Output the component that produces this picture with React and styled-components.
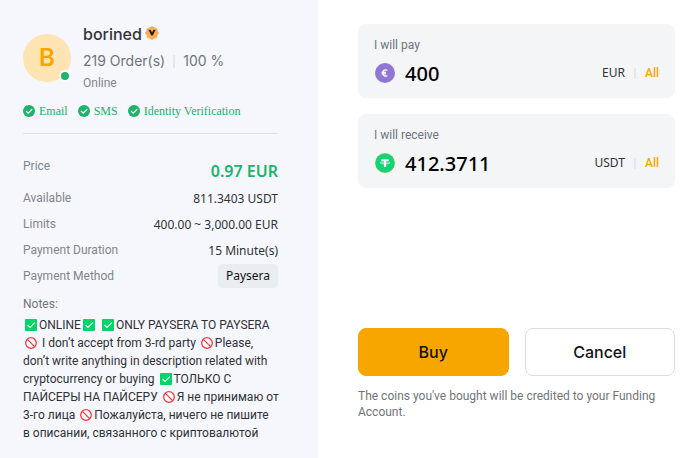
import React, { useState } from 'react';
import styled, { createGlobalStyle } from 'styled-components';

const GlobalStyle = createGlobalStyle`
  * {
    box-sizing: border-box;
  }

  body {
    margin: 0;
    background: #fff;
    color: #121214;
    font-family: Roboto, 'Noto Sans', sans-serif;
    font-size: 12px;
    line-height: 18px;
  }

  h2, p, dl, dd {
    margin: 0;
  }

  button, input {
    font-family: inherit;
  }
`;

const displayFont = "Inter, 'Noto Sans', sans-serif";
const numberFont = "'Noto Sans', sans-serif";

const Page = styled.main`
  display: grid;
  grid-template-columns: minmax(0, 318fr) minmax(0, 379fr);
  min-height: 100vh;
`;

const Advertiser = styled.section`
  background: #f5f7fc;
  padding: 23px 40px 16px 23px;
`;

const Profile = styled.div`
  display: flex;
  align-items: center;
  gap: 12px;
`;

const Avatar = styled.div`
  position: relative;
  display: flex;
  align-items: center;
  justify-content: center;
  flex: none;
  width: 48px;
  height: 48px;
  border-radius: 50%;
  background: #fde4b2;
  color: #f7a600;
  font-family: ${displayFont};
  font-size: 24px;
  font-weight: 600;
`;

const OnlineDot = styled.span`
  position: absolute;
  right: 0;
  bottom: 0;
  width: 12px;
  height: 12px;
  border: 2px solid #fff;
  border-radius: 50%;
  background: #20b26c;
`;

const ProfileText = styled.div`
  display: flex;
  flex-direction: column;
`;

const Name = styled.h2`
  display: flex;
  align-items: center;
  gap: 2px;
  font-family: ${displayFont};
  font-size: 16px;
  font-weight: 500;
  line-height: 22px;
  color: #303236;

  svg {
    margin-bottom: 2px;
  }
`;

const Stats = styled.div`
  display: flex;
  align-items: center;
  margin-top: 5px;
  font-family: ${displayFont};
  font-size: 14px;
  line-height: 22px;
  color: #71757a;
`;

const Divider = styled.span`
  width: 2px;
  height: ${({ $height }) => $height}px;
  margin: 0 ${({ $space }) => $space}px;
  background: #e5e7ea;
`;

const Status = styled.span`
  margin-top: 2px;
  color: #81858c;
`;

const Checks = styled.div`
  display: flex;
  gap: 10px;
  margin-top: 10px;
  padding-bottom: 13px;
  border-bottom: 1px solid #dfe1e6;
  color: #20b26c;
  font-family: 'Liberation Serif', serif;
`;

const Check = styled.span`
  display: flex;
  align-items: center;
  gap: 4px;
  white-space: nowrap;
`;

const Details = styled.dl`
  display: flex;
  flex-direction: column;
  gap: 8px;
  margin-top: 23px;
`;

const Detail = styled.div`
  display: flex;
  justify-content: space-between;
  height: ${({ $tall }) => ($tall ? 24 : 18)}px;
`;

const Term = styled.dt`
  color: #81858c;
`;

const Value = styled.dd`
  padding-top: 1px;
  color: #303236;
  font-family: ${numberFont};
`;

const Price = styled.dd`
  padding-top: 3px;
  color: #20b26c;
  font-family: ${numberFont};
  font-size: 16px;
  font-weight: 600;
  line-height: 22px;
`;

const Method = styled.dd`
  align-self: center;
  flex: none;
  padding: 3px 8px;
  border-radius: 4px;
  background: #e9ecf0;
  color: #121214;
  font-family: ${numberFont};
`;

const NotesTitle = styled.p`
  margin-top: 10px;
  color: #71757a;
`;

const Notes = styled.p`
  margin-top: 3px;
  color: #303236;
  white-space: nowrap;
`;

const Emoji = styled.svg`
  width: 12px;
  height: 12px;
  margin: 0 2px;
  vertical-align: -2px;
`;

const Order = styled.form`
  display: flex;
  flex-direction: column;
  padding: 24px 22px 16px 40px;
`;

const Field = styled.div`
  margin-bottom: 16px;
  padding: 12px 16px 8px;
  border-radius: 8px;
  background: #f3f5f7;
`;

const FieldLabel = styled.label`
  display: block;
  color: #71757a;
`;

const FieldRow = styled.div`
  display: flex;
  align-items: center;
  margin-top: 2px;
  height: 34px;
`;

const CoinIcon = styled.svg`
  flex: none;
  width: 22px;
  height: 22px;
`;

const Amount = styled.input`
  flex: 1;
  min-width: 0;
  height: 28px;
  margin-left: 9px;
  padding: 0;
  border: 0;
  outline: 0;
  background: none;
  color: #000;
  font-family: ${numberFont};
  font-size: 20px;
  font-weight: 500;
`;

const Currency = styled.span`
  color: #303236;
  font-family: ${numberFont};
`;

const AllButton = styled.button`
  padding: 0;
  border: 0;
  background: none;
  color: #f7a600;
  font-size: 12px;
  font-weight: 500;
  cursor: pointer;
`;

const Actions = styled.div`
  display: grid;
  grid-template-columns: 1fr 1fr;
  gap: 16px;
  margin-top: 124px;
`;

const ActionButton = styled.button`
  height: 48px;
  border: 1px solid ${({ $primary }) => ($primary ? '#f7a600' : '#d9dce0')};
  border-radius: 8px;
  background: ${({ $primary }) => ($primary ? '#f7a600' : '#fff')};
  color: #121214;
  font-family: ${displayFont};
  font-size: 16px;
  font-weight: 500;
  cursor: pointer;
`;

const Hint = styled.p`
  margin-top: 12px;
  color: #71757a;
  line-height: 16px;
`;

const VerifiedBadge = () => (
  <svg width="16" height="16" viewBox="0 0 16 16" aria-hidden="true">
    <path
      d="M8 1.5L10.1 2.9L12.6 3.4L13.1 5.9L14.5 8L13.1 10.1L12.6 12.6L10.1 13.1L8 14.5L5.9 13.1L3.4 12.6L2.9 10.1L1.5 8L2.9 5.9L3.4 3.4L5.9 2.9Z"
      fill="#f9ae55"
      stroke="#f9ae55"
      strokeLinejoin="round"
    />
    <path d="M4.5 4.8h2l1.6 2.4 1.5-2.4h2L8.9 10.5H7.2z" fill="#27231f" />
  </svg>
);

const CheckIcon = () => (
  <svg width="12" height="12" viewBox="0 0 12 12" aria-hidden="true">
    <circle cx="6" cy="6" r="6" fill="#20b26c" />
    <path d="M3 6l2.2 2.2L9.2 4.2" fill="none" stroke="#fff" strokeWidth="1.2" />
  </svg>
);

const Yes = () => (
  <Emoji viewBox="0 0 12 12" role="img" aria-label="Yes">
    <rect width="12" height="12" rx="1" fill="#00d569" />
    <path d="M2.5 6l2.5 2.5L9.8 3.7" fill="none" stroke="#fff" strokeWidth="1.2" />
  </Emoji>
);

const No = () => (
  <Emoji viewBox="0 0 12 12" role="img" aria-label="No">
    <circle cx="6" cy="6" r="5.3" fill="#fff" stroke="#fb3640" strokeWidth="1.3" />
    <path d="M2.4 2.4l7.2 7.2" stroke="#fb3640" strokeWidth="1.3" />
  </Emoji>
);

const EuroIcon = () => (
  <CoinIcon viewBox="0 0 22 22" aria-hidden="true">
    <circle cx="11" cy="11" r="10" fill="#9077d3" />
    <path
      d="M13.4 8.6A2.9 3.2 0 0 0 8.7 11a2.9 3.2 0 0 0 4.7 2.4M7.6 10.3h4.4M7.6 11.8h4.4"
      fill="none"
      stroke="#fff"
      strokeWidth="1.3"
    />
  </CoinIcon>
);

const TetherIcon = () => (
  <CoinIcon viewBox="0 0 22 22" aria-hidden="true">
    <circle cx="11" cy="11" r="10" fill="#d6bd58" />
    <circle cx="11" cy="11" r="9.6" fill="#0fd575" />
    <path d="M7.3 7.2h7.4v1.9h-2.6v6H9.9v-6H7.3z" fill="#fff" />
    <ellipse cx="11" cy="10.8" rx="4.7" ry="1" fill="none" stroke="#fff" strokeWidth="0.7" />
  </CoinIcon>
);

const CHECKS = ['Email', 'SMS', 'Identity Verification'];

const DETAILS = [
  ['Available', '811.3403 USDT'],
  ['Limits', '400.00 ~ 3,000.00 EUR'],
  ['Payment Duration', '15 Minute(s)'],
];

const AmountField = ({ id, label, icon, initial, currency }) => {
  const [value, setValue] = useState(initial);

  return (
    <Field>
      <FieldLabel htmlFor={id}>{label}</FieldLabel>
      <FieldRow>
        {icon}
        <Amount id={id} value={value} onChange={(e) => setValue(e.target.value)} />
        <Currency>{currency}</Currency>
        <Divider $height={11} $space={9} />
        <AllButton type="button" onClick={() => setValue(initial)}>
          All
        </AllButton>
      </FieldRow>
    </Field>
  );
};

export default function App() {
  return (
    <>
      <GlobalStyle />
      <Page>
        <Advertiser>
          <Profile>
            <Avatar>
              B
              <OnlineDot />
            </Avatar>
            <ProfileText>
              <Name>
                borined <VerifiedBadge />
              </Name>
              <Stats>
                219 Order(s)
                <Divider $height={13} $space={8} />
                100 %
              </Stats>
              <Status>Online</Status>
            </ProfileText>
          </Profile>

          <Checks>
            {CHECKS.map((check) => (
              <Check key={check}>
                <CheckIcon />
                {check}
              </Check>
            ))}
          </Checks>

          <Details>
            <Detail $tall>
              <Term>Price</Term>
              <Price>0.97 EUR</Price>
            </Detail>
            {DETAILS.map(([term, value]) => (
              <Detail key={term}>
                <Term>{term}</Term>
                <Value>{value}</Value>
              </Detail>
            ))}
            <Detail>
              <Term>Payment Method</Term>
              <Method>Paysera</Method>
            </Detail>
          </Details>

          <NotesTitle>Notes:</NotesTitle>
          <Notes>
            <Yes />ONLINE<Yes /> <Yes />ONLY PAYSERA TO PAYSERA
            <br />
            <No /> I don’t accept from 3-rd party <No />Please,
            <br />
            don’t write anything in description related with
            <br />
            cryptocurrency or buying <Yes />ТОЛЬКО С
            <br />
            ПАЙСЕРЫ НА ПАЙСЕРУ <No />Я не принимаю от
            <br />
            3-го лица <No />Пожалуйста, ничего не пишите
            <br />
            в описании, связанного с криптовалютой
          </Notes>
        </Advertiser>

        <Order onSubmit={(e) => e.preventDefault()}>
          <AmountField id="pay" label="I will pay" icon={<EuroIcon />} initial="400" currency="EUR" />
          <AmountField
            id="receive"
            label="I will receive"
            icon={<TetherIcon />}
            initial="412.3711"
            currency="USDT"
          />
          <Actions>
            <ActionButton type="submit" $primary>
              Buy
            </ActionButton>
            <ActionButton type="button">Cancel</ActionButton>
          </Actions>
          <Hint>The coins you've bought will be credited to your Funding Account.</Hint>
        </Order>
      </Page>
    </>
  );
}
